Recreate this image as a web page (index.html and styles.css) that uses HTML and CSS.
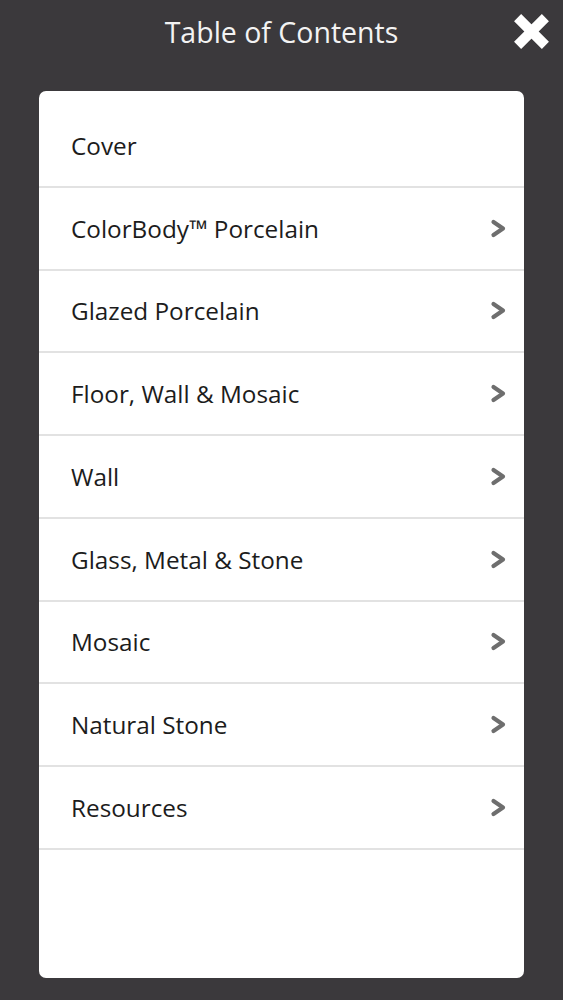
FILE: index.html
```html
<!DOCTYPE html>
<html>
<head>
<meta charset="utf-8">
<link rel="stylesheet" href="styles.css">
</head>
<body>
<div class="screen">
  <header class="header">
    <div class="spacer"></div>
    <h1 class="title">Table of Contents</h1>
    <div class="close">
      <svg width="35" height="35" viewBox="0 0 35 35"><path d="M3.6 3.6L31.4 31.4M31.4 3.6L3.6 31.4" stroke="#ffffff" stroke-width="10" fill="none"/></svg>
    </div>
  </header>
  <main class="card">
    <ul class="list">
      <li class="row"><span class="label">Cover</span></li>
      <li class="row"><span class="label">ColorBody™ Porcelain</span><svg class="chev" width="17" height="19" viewBox="0 0 17 19"><path d="M3.5 3L13 9.5L3.5 16" stroke="#6e6e6e" stroke-width="4.2" fill="none" stroke-linejoin="round" stroke-linecap="round"/></svg></li>
      <li class="row"><span class="label">Glazed Porcelain</span><svg class="chev" width="17" height="19" viewBox="0 0 17 19"><path d="M3.5 3L13 9.5L3.5 16" stroke="#6e6e6e" stroke-width="4.2" fill="none" stroke-linejoin="round" stroke-linecap="round"/></svg></li>
      <li class="row"><span class="label">Floor, Wall &amp; Mosaic</span><svg class="chev" width="17" height="19" viewBox="0 0 17 19"><path d="M3.5 3L13 9.5L3.5 16" stroke="#6e6e6e" stroke-width="4.2" fill="none" stroke-linejoin="round" stroke-linecap="round"/></svg></li>
      <li class="row"><span class="label">Wall</span><svg class="chev" width="17" height="19" viewBox="0 0 17 19"><path d="M3.5 3L13 9.5L3.5 16" stroke="#6e6e6e" stroke-width="4.2" fill="none" stroke-linejoin="round" stroke-linecap="round"/></svg></li>
      <li class="row"><span class="label">Glass, Metal &amp; Stone</span><svg class="chev" width="17" height="19" viewBox="0 0 17 19"><path d="M3.5 3L13 9.5L3.5 16" stroke="#6e6e6e" stroke-width="4.2" fill="none" stroke-linejoin="round" stroke-linecap="round"/></svg></li>
      <li class="row"><span class="label">Mosaic</span><svg class="chev" width="17" height="19" viewBox="0 0 17 19"><path d="M3.5 3L13 9.5L3.5 16" stroke="#6e6e6e" stroke-width="4.2" fill="none" stroke-linejoin="round" stroke-linecap="round"/></svg></li>
      <li class="row"><span class="label">Natural Stone</span><svg class="chev" width="17" height="19" viewBox="0 0 17 19"><path d="M3.5 3L13 9.5L3.5 16" stroke="#6e6e6e" stroke-width="4.2" fill="none" stroke-linejoin="round" stroke-linecap="round"/></svg></li>
      <li class="row"><span class="label">Resources</span><svg class="chev" width="17" height="19" viewBox="0 0 17 19"><path d="M3.5 3L13 9.5L3.5 16" stroke="#6e6e6e" stroke-width="4.2" fill="none" stroke-linejoin="round" stroke-linecap="round"/></svg></li>
    </ul>
  </main>
</div>
</body>
</html>
```

FILE: styles.css
```css
html, body {
  margin: 0;
  padding: 0;
  background: #3b393c;
}
.screen {
  width: 563px;
  height: 1000px;
  overflow: hidden;
  font-family: "Open Sans", "Noto Sans", sans-serif;
}
.header {
  height: 91px;
  display: grid;
  grid-template-columns: 1fr auto 1fr;
  align-items: start;
}
.title {
  margin: 0;
  padding-top: 13px;
  font-size: 28.5px;
  font-weight: 400;
  line-height: normal;
  color: #f3f3f3;
  white-space: nowrap;
}
.close {
  justify-self: end;
  margin-top: 14px;
  margin-right: 14px;
  width: 35px;
  height: 35px;
}
.close svg { display: block; }
.card {
  display: block;
  margin: 0 39px;
  height: 887px;
  box-sizing: border-box;
  padding-top: 14px;
  background: #ffffff;
  border-radius: 7px;
}
.list {
  list-style: none;
  margin: 0;
  padding: 0;
}
.row {
  height: 82.75px;
  box-sizing: border-box;
  border-bottom: 2px solid #e2e2e2;
  display: flex;
  align-items: center;
  justify-content: space-between;
  padding: 0 17px 0 32px;
}
.label {
  font-size: 24.3px;
  line-height: normal;
  color: #1c1c1c;
}
.chev { display: block; flex: none; }
```
